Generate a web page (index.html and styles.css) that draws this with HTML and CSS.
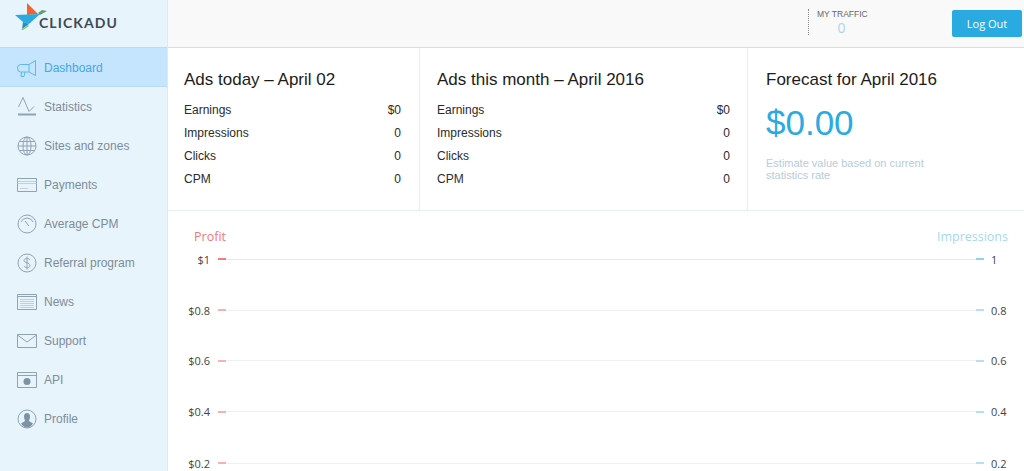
FILE: index.html
```html
<!DOCTYPE html>
<html lang="en">
<head>
    <meta charset="UTF-8">
    <meta name="viewport" content="width=device-width, initial-scale=1.0">
    <title>Clickadu Dashboard</title>
    <link rel="stylesheet" href="styles.css">
</head>
<body>
    <div class="page">
        <aside class="sidebar">
            <div class="logo">
                <svg class="logo-mark" width="34" height="30" viewBox="0 0 34 30">
                    <polygon points="12,2 23,13 12,14" fill="#f4622a"/>
                    <polygon points="23,12 27,9 32,10 25,14" fill="#5f9e6e"/>
                    <polygon points="0,14 25,13 14,23 8,21" fill="#29abe2"/>
                    <polygon points="8,21 14,23 7,28" fill="#1f8fd0"/>
                    <polygon points="6,29 13,24 14,25 8,29" fill="#8cc63f"/>
                </svg>
                <span class="logo-text">CLICKADU</span>
            </div>
            <nav class="menu">
                <a class="menu-item active">
                    <svg class="icon" viewBox="0 0 20 20"><path d="M12 6.500L18.500 2.500v15L12 14H3.500A3 3.750 0 0 1 3.500 6.500zM12 6.500V14M4.500 14L4 18.500h3l1-4.500"/></svg>
                    Dashboard
                </a>
                <a class="menu-item">
                    <svg class="icon" viewBox="0 0 20 20"><path d="M1.500 10L6 .5l6 14 5-5"/><path class="icon-base" d="M1 17.500h18"/></svg>
                    Statistics
                </a>
                <a class="menu-item">
                    <svg class="icon" viewBox="0 0 20 20"><circle cx="10" cy="10" r="9"/><ellipse cx="10" cy="10" rx="4" ry="9"/><path d="M10 1v18M1 10h18M2.500 5.500h15M2.500 14.500h15"/></svg>
                    Sites and zones
                </a>
                <a class="menu-item">
                    <svg class="icon" viewBox="0 0 20 20"><path d="M.5 3.500h19v13H.5z"/><path class="icon-light" d="M.5 6.500h19M.5 8.500h19M3 13.500h8"/></svg>
                    Payments
                </a>
                <a class="menu-item">
                    <svg class="icon" viewBox="0 0 20 20"><circle cx="10" cy="10" r="9"/><path d="M4 8a6.500 6.500 0 0 1 12 0M8 7l4 5"/></svg>
                    Average CPM
                </a>
                <a class="menu-item">
                    <svg class="icon" viewBox="0 0 20 20"><circle cx="10" cy="10" r="9"/><path d="M13 7c-1-2-6-2-6 .5s6 2 6 5-5 2.500-6 .5M10 3.500v13"/></svg>
                    Referral program
                </a>
                <a class="menu-item">
                    <svg class="icon" viewBox="0 0 20 20"><path d="M.5 2.500h19v15H.5zM.5 4.500h19"/><path class="icon-light" d="M3 7.500h14M3 9.500h14M3 11.500h14M3 13.500h14M3 15.500h14"/></svg>
                    News
                </a>
                <a class="menu-item">
                    <svg class="icon" viewBox="0 0 20 20"><path d="M.5 3.500h19v13H.5zM.5 4l9.500 7 9.500-7"/></svg>
                    Support
                </a>
                <a class="menu-item">
                    <svg class="icon" viewBox="0 0 20 20"><path d="M.5 2.500h19v15H.5zM.5 5.500h19"/><circle class="icon-solid" cx="10" cy="11.500" r="3.500"/></svg>
                    API
                </a>
                <a class="menu-item">
                    <svg class="icon" viewBox="0 0 20 20"><circle cx="10" cy="10" r="9"/><path class="icon-solid" d="M10 4c2 0 3 1.500 3 3.500S12 11 12 12l4 2.500c-1.500 2.500-3.500 4-6 4s-4.500-1.500-6-4L8 12c0-1-1-2.500-1-4.500S8 4 10 4z"/></svg>
                    Profile
                </a>
            </nav>
        </aside>

        <main class="content">
            <header class="topbar">
                <div class="traffic">
                    <div class="traffic-label">MY TRAFFIC</div>
                    <div class="traffic-value">0</div>
                </div>
                <button class="logout">Log Out</button>
            </header>

            <section class="panels">
                <div class="panel panel-today">
                    <h2>Ads today – April 02</h2>
                    <div class="stat-row"><span>Earnings</span><span>$0</span></div>
                    <div class="stat-row"><span>Impressions</span><span>0</span></div>
                    <div class="stat-row"><span>Clicks</span><span>0</span></div>
                    <div class="stat-row"><span>CPM</span><span>0</span></div>
                </div>
                <div class="panel panel-month">
                    <h2>Ads this month – April 2016</h2>
                    <div class="stat-row"><span>Earnings</span><span>$0</span></div>
                    <div class="stat-row"><span>Impressions</span><span>0</span></div>
                    <div class="stat-row"><span>Clicks</span><span>0</span></div>
                    <div class="stat-row"><span>CPM</span><span>0</span></div>
                </div>
                <div class="panel panel-forecast">
                    <h2>Forecast for April 2016</h2>
                    <div class="forecast-value">$0.00</div>
                    <p class="forecast-note">Estimate value based on current<br>statistics rate</p>
                </div>
            </section>

            <section class="chart">
                <div class="chart-legend">
                    <span class="legend-profit">Profit</span>
                    <span class="legend-impressions">Impressions</span>
                </div>
                <div class="chart-row first">
                    <span class="axis-left">$1</span><i class="tick-left"></i><i class="grid-line"></i><i class="tick-right"></i><span class="axis-right">1</span>
                </div>
                <div class="chart-row">
                    <span class="axis-left">$0.8</span><i class="tick-left"></i><i class="grid-line"></i><i class="tick-right"></i><span class="axis-right">0.8</span>
                </div>
                <div class="chart-row">
                    <span class="axis-left">$0.6</span><i class="tick-left"></i><i class="grid-line"></i><i class="tick-right"></i><span class="axis-right">0.6</span>
                </div>
                <div class="chart-row">
                    <span class="axis-left">$0.4</span><i class="tick-left"></i><i class="grid-line"></i><i class="tick-right"></i><span class="axis-right">0.4</span>
                </div>
                <div class="chart-row last">
                    <span class="axis-left">$0.2</span><i class="tick-left"></i><i class="grid-line"></i><i class="tick-right"></i><span class="axis-right">0.2</span>
                </div>
            </section>
        </main>
    </div>
</body>
</html>
```

FILE: styles.css
```css
html, body {
    height: 100%;
}
body {
    margin: 0;
    overflow: hidden;
    font-family: "Liberation Sans", Arial, sans-serif;
    background-color: #ffffff;
    color: #222222;
}
.page {
    display: flex;
    height: 471px;
    overflow: hidden;
}

/* sidebar */
.sidebar {
    width: 167px;
    flex: none;
    background-color: #e8f4fc;
    border-right: 1px solid #dfe9f2;
}
.logo {
    display: flex;
    align-items: flex-start;
    height: 47px;
    padding: 1px 0 0 15px;
    box-sizing: border-box;
}
.logo-mark {
    flex: none;
}
.logo-text {
    margin: 14px 0 0 -10px;
    font-family: Lato, sans-serif;
    font-size: 14px;
    font-weight: bold;
    line-height: 16px;
    letter-spacing: 1.1px;
    color: #3d4a52;
}
.menu-item {
    display: flex;
    align-items: center;
    height: 39px;
    padding-left: 17px;
    font-size: 12px;
    color: #7c8c99;
}
.menu-item.active {
    height: 40px;
    box-sizing: border-box;
    padding-top: 2px;
    background-color: #c4e5fd;
    border-top: 1px solid #b9dcf3;
    border-bottom: 1px solid #b9dcf3;
    color: #44a7e6;
}
.icon {
    width: 20px;
    height: 20px;
    margin-right: 7px;
    fill: none;
    stroke: #8fa3b2;
    stroke-width: 1;
    flex: none;
}
.menu-item.active .icon {
    stroke: #5cb8ee;
}
.icon-solid {
    fill: #7d93a3;
    stroke: none;
}
.icon-light {
    stroke: #c3d0da;
}
.icon-base {
    stroke-width: 2;
}

/* top bar */
.content {
    flex: 1;
    min-width: 0;
}
.topbar {
    display: flex;
    justify-content: flex-end;
    height: 47px;
    background-color: #f9f9f9;
    border-bottom: 1px solid #d5dfe9;
}
.traffic {
    width: 144px;
    height: 26px;
    margin-top: 9px;
    padding-left: 8px;
    box-sizing: border-box;
    border-left: 1px dotted #888888;
}
.traffic-label {
    font-size: 8.500px;
    line-height: 11px;
    color: #666666;
}
.traffic-value {
    width: 49px;
    font-family: "Open Sans", sans-serif;
    font-size: 14px;
    line-height: 15px;
    text-align: center;
    color: #a9d6ec;
}
.logout {
    width: 70px;
    height: 27px;
    margin: 10px 2px 0 0;
    padding: 0;
    border: none;
    border-radius: 2px;
    background-color: #29abe2;
    font-family: "Open Sans", sans-serif;
    font-size: 11px;
    color: #ffffff;
    cursor: pointer;
}

/* summary panels */
.panels {
    display: flex;
    height: 162px;
    border-bottom: 1px solid #e9eef2;
}
.panel {
    box-sizing: border-box;
    padding: 22px 18px 0 16px;
}
.panel h2 {
    margin: 0 0 9px;
    font-size: 17px;
    font-weight: normal;
    line-height: 20px;
    color: #1c1c1c;
}
.panel-today {
    width: 252px;
    border-right: 1px solid #e9eef2;
}
.panel-month {
    width: 328px;
    padding: 22px 17px 0 17px;
    border-right: 1px solid #e9eef2;
}
.panel-forecast {
    flex: 1;
    padding-left: 18px;
}
.stat-row {
    display: flex;
    justify-content: space-between;
    font-size: 12px;
    line-height: 23px;
    color: #2a2a2a;
}
.forecast-value {
    margin-top: 3px;
    font-size: 35px;
    line-height: 48px;
    color: #29abe2;
}
.forecast-note {
    margin: 10px 0 0;
    font-size: 11px;
    line-height: 12px;
    color: #b8cbdb;
}

/* chart */
.chart {
    font-family: "Open Sans", sans-serif;
}
.chart-legend {
    display: flex;
    justify-content: space-between;
    padding: 17px 16px 0 26px;
    font-size: 12.500px;
    line-height: 18px;
}
.legend-profit {
    color: #f2777a;
}
.legend-impressions {
    color: #a3d9f1;
}
.chart-row {
    display: flex;
    align-items: center;
    height: 50.750px;
    font-size: 11px;
    color: #444444;
}
.chart-row.first {
    margin-top: -12px;
}
.chart-row.last {
    height: 16px;
    margin-top: 18px;
}
.axis-left {
    width: 42px;
    text-align: right;
    flex: none;
}
.axis-right {
    width: 40px;
    padding-left: 7px;
    box-sizing: border-box;
    flex: none;
}
.tick-left, .tick-right {
    width: 8px;
    height: 2px;
    flex: none;
}
.tick-left {
    margin-left: 8px;
    background-color: #f9b0b0;
}
.tick-right {
    background-color: #b5e0f3;
}
.first .tick-left {
    background-color: #f27c7c;
}
.first .tick-right {
    background-color: #8fd0ec;
}
.grid-line {
    flex: 1;
    height: 1px;
    background-color: #f0f0f0;
}
.first .grid-line {
    background-color: #e6e6e6;
}
```
